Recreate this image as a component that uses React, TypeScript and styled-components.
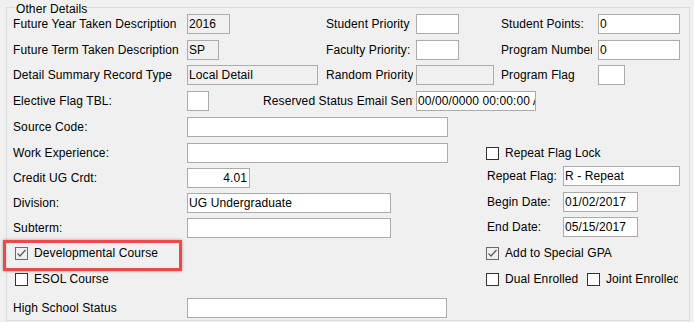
import React from "react";
import styled, { createGlobalStyle } from "styled-components";

const GlobalStyle = createGlobalStyle`
  body {
    margin: 0;
    background: #f0f0f0;
    font-family: "Liberation Sans", Arial, sans-serif;
    font-size: 12px;
    letter-spacing: 0.1px;
    color: #000;
  }
`;

const CheckMark: React.FC = () => (
    <svg width="11" height="11" viewBox="0 0 11 11">
        <polyline points="1.5,5.5 4,8 9.5,2" fill="none" stroke="#5c5c5c" strokeWidth="1.3" />
    </svg>
);

type CheckProps = { label: string; checked?: boolean; w?: number; ml?: number };

const Check: React.FC<CheckProps> = ({ label, checked, w, ml }) => (
    <CheckItem $w={w} $ml={ml}>
        <Box $on={checked}>{checked && <CheckMark />}</Box>
        <span>{label}</span>
    </CheckItem>
);

const App: React.FC = () => {
    return (
        <>
            <GlobalStyle />
            <GroupBox>
                <Legend>Other Details</Legend>

                <Row>
                    <Label $w={174}>Future Year Taken Description</Label>
                    <Slot $w={139}>
                        <Field $w={43} $ro>2016</Field>
                    </Slot>
                    <Label $w={90} $clip={87}>Student Priority</Label>
                    <Slot $w={85}>
                        <Field $w={43} />
                    </Slot>
                    <Label $w={97} $clip={91}>Student Points:</Label>
                    <Field $w={82}>0</Field>
                </Row>

                <Row $mt={6}>
                    <Label $w={174}>Future Term Taken Description</Label>
                    <Slot $w={139}>
                        <Field $w={32} $ro>SP</Field>
                    </Slot>
                    <Label $w={90} $clip={87}>Faculty Priority:</Label>
                    <Slot $w={85}>
                        <Field $w={43} />
                    </Slot>
                    <Label $w={97} $clip={91}>Program Number</Label>
                    <Field $w={82}>0</Field>
                </Row>

                <Row $mt={5}>
                    <Label $w={174}>Detail Summary Record Type</Label>
                    <Slot $w={139}>
                        <Field $w={131} $ro>Local Detail</Field>
                    </Slot>
                    <Label $w={90} $clip={87}>Random Priority</Label>
                    <Slot $w={85}>
                        <Field $w={78} $ro />
                    </Slot>
                    <Label $w={97} $clip={91}>Program Flag</Label>
                    <Field $w={27} />
                </Row>

                <Row $mt={6}>
                    <Label $w={174}>Elective Flag TBL:</Label>
                    <Slot $w={76}>
                        <Field $w={22} />
                    </Slot>
                    <Label $w={153} $clip={150}>Reserved Status Email Sent</Label>
                    <Field $w={120}>00/00/0000 00:00:00 AM</Field>
                </Row>

                <Row $mt={6}>
                    <Label $w={174}>Source Code:</Label>
                    <Slot $w={299}>
                        <Field $w={261} />
                    </Slot>
                </Row>

                <Row $mt={6}>
                    <Label $w={174}>Work Experience:</Label>
                    <Slot $w={299}>
                        <Field $w={261} />
                    </Slot>
                    <Check label="Repeat Flag Lock" />
                </Row>

                <Row $mt={5}>
                    <Label $w={174}>Credit UG Crdt:</Label>
                    <Slot $w={299}>
                        <Field $w={63} $right>4.01</Field>
                    </Slot>
                    <Side $lift={2}>
                        <Label $w={77} $pl={1}>Repeat Flag:</Label>
                        <Field $w={117}>R - Repeat</Field>
                    </Side>
                </Row>

                <Row $mt={5}>
                    <Label $w={174}>Division:</Label>
                    <Slot $w={299}>
                        <Field $w={204}>UG Undergraduate</Field>
                    </Slot>
                    <Side $lift={1}>
                        <Label $w={77} $pl={1}>Begin Date:</Label>
                        <Field $w={75}>01/02/2017</Field>
                    </Side>
                </Row>

                <Row $mt={5}>
                    <Label $w={174}>Subterm:</Label>
                    <Slot $w={299}>
                        <Field $w={204} />
                    </Slot>
                    <Side $lift={1}>
                        <Label $w={77} $pl={1}>End Date:</Label>
                        <Field $w={75}>05/15/2017</Field>
                    </Side>
                </Row>

                <Row $mt={5}>
                    <Slot $w={473}>
                        <Highlight>
                            <Check label="Developmental Course" checked ml={2} />
                        </Highlight>
                    </Slot>
                    <Check label="Add to Special GPA" checked />
                </Row>

                <Row $mt={6}>
                    <Slot $w={473}>
                        <Check label="ESOL Course" ml={2} />
                    </Slot>
                    <Check label="Dual Enrolled" w={101} />
                    <Check label="Joint Enrolled" w={91} />
                </Row>

                <Row $mt={9}>
                    <Label $w={174}>High School Status</Label>
                    <Field $w={260} />
                </Row>
            </GroupBox>
        </>
    );
};

export default App;

/* ~~~~~~ -- styling -- ~~~~~~ */

const GroupBox = styled.section`
    position: relative;
    box-sizing: border-box;
    width: 684px;
    height: 314px;
    margin: 7px 0 0 6px;
    padding: 6px 0 0 6px;
    border: 1px solid #dcdcdc;
    display: flex;
    flex-direction: column;
`;

const Legend = styled.span`
    position: absolute;
    top: -6px;
    left: 8px;
    padding: 0 1px;
    line-height: 14px;
    background: #f0f0f0;
`;

const Row = styled.div<{ $mt?: number }>`
    flex: none;
    display: flex;
    align-items: center;
    height: 20px;
    margin-top: ${props => props.$mt ?? 0}px;
`;

const Label = styled.span<{ $w: number; $clip?: number; $pl?: number }>`
    flex: none;
    box-sizing: border-box;
    width: ${props => props.$clip ?? props.$w}px;
    margin-right: ${props => (props.$clip ? props.$w - props.$clip : 0)}px;
    padding-left: ${props => props.$pl ?? 0}px;
    overflow: hidden;
    white-space: nowrap;
    line-height: 20px;
`;

const Slot = styled.div<{ $w: number }>`
    flex: none;
    display: flex;
    align-items: center;
    width: ${props => props.$w}px;
`;

const Side = styled.div<{ $lift?: number }>`
    display: flex;
    align-items: center;
    align-self: flex-start;
    margin-top: ${props => -(props.$lift ?? 0)}px;
`;

const Field = styled.div<{ $w: number; $ro?: boolean; $right?: boolean }>`
    flex: none;
    box-sizing: border-box;
    width: ${props => props.$w}px;
    height: 20px;
    border: 1px solid #ababab;
    background: ${props => (props.$ro ? "#f0f0f0" : "#fff")};
    padding: ${props => (props.$right ? "0 2px 0 0" : "0 0 0 1px")};
    text-align: ${props => (props.$right ? "right" : "left")};
    line-height: 18px;
    white-space: nowrap;
    overflow: hidden;
`;

const CheckItem = styled.label<{ $w?: number; $ml?: number }>`
    flex: none;
    display: flex;
    align-items: center;
    gap: 6px;
    width: ${props => (props.$w ? `${props.$w}px` : "auto")};
    margin-left: ${props => props.$ml ?? 0}px;
    overflow: hidden;
    white-space: nowrap;
    line-height: 16px;
`;

const Box = styled.span<{ $on?: boolean }>`
    flex: none;
    box-sizing: border-box;
    width: 13px;
    height: 13px;
    display: flex;
    align-items: center;
    justify-content: center;
    border: 1px solid ${props => (props.$on ? "#6a6a6a" : "#333")};
    background: ${props => (props.$on ? "#f0f0f0" : "#fff")};
`;

const Highlight = styled.div`
    position: relative;
    display: flex;
    &::after {
        content: "";
        position: absolute;
        left: -10px;
        top: -5px;
        width: 179px;
        height: 31px;
        box-sizing: border-box;
        border: 3px solid #ee4848;
        box-shadow: 0 0 3px rgba(0, 0, 0, 0.35);
        pointer-events: none;
    }
`;
